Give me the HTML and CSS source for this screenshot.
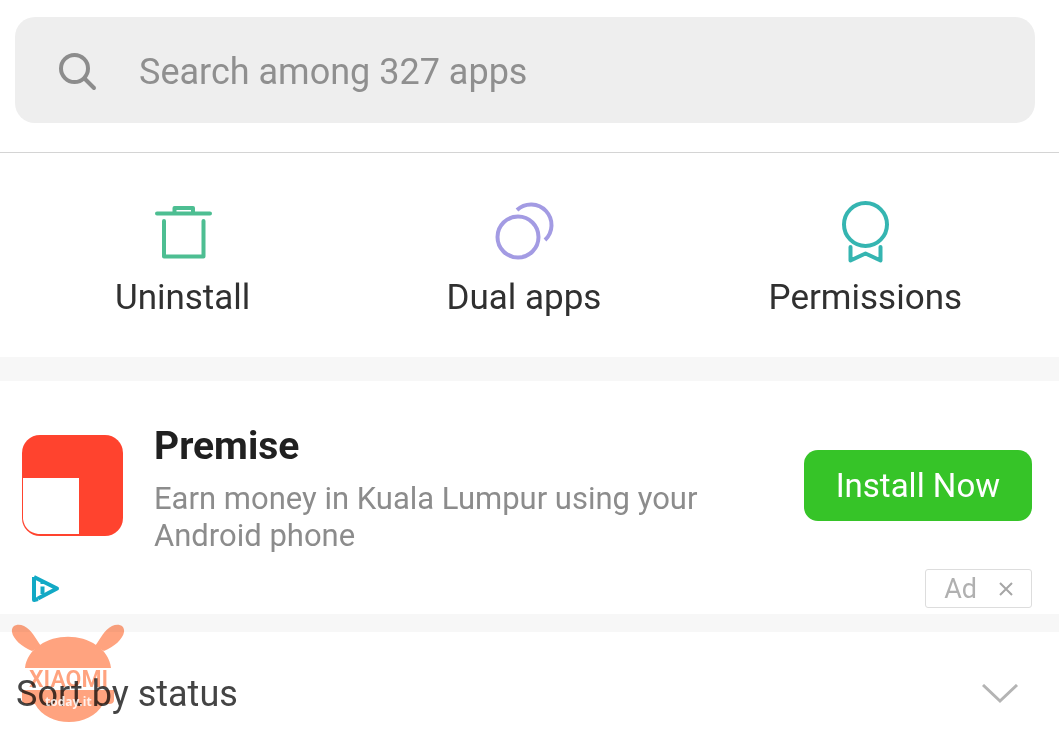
FILE: index.html
```html
<!DOCTYPE html>
<html lang="en">
<head>
    <meta charset="UTF-8">
    <meta name="viewport" content="width=device-width, initial-scale=1.0">
    <title>Manage apps</title>
    <link rel="stylesheet" href="styles.css">
</head>
<body>
    <!-- Search -->
    <header class="search-header">
        <label class="search-box">
            <svg class="search-icon" viewBox="0 0 40 40" aria-hidden="true">
                <circle cx="15.5" cy="16.5" r="13.5" />
                <path d="M25.5 26.5 L35 36" />
            </svg>
            <input type="text" class="search-input" placeholder="Search among 327 apps" aria-label="Search apps">
        </label>
    </header>

    <!-- Main actions -->
    <nav class="actions">
        <button type="button" class="action">
            <svg class="action-icon green" viewBox="0 0 64 64" aria-hidden="true">
                <path d="M6 12.5 H59 M23.5 12 V7 H42 V12 M13 20 V55.5 H52.5 V20" />
            </svg>
            <span>Uninstall</span>
        </button>
        <button type="button" class="action">
            <svg class="action-icon purple" viewBox="0 0 64 64" aria-hidden="true">
                <circle cx="26" cy="36" r="20.5" />
                <path d="M25 9 A20.5 20.5 0 0 1 53 39" />
            </svg>
            <span>Dual apps</span>
        </button>
        <button type="button" class="action">
            <svg class="action-icon teal" viewBox="0 0 64 64" aria-hidden="true">
                <circle cx="32.5" cy="23.5" r="21.5" />
                <path d="M17.5 46 V59.5 L32.5 52.5 L47.5 59.5 V46" />
            </svg>
            <span>Permissions</span>
        </button>
    </nav>

    <!-- Sponsored app -->
    <section class="ad">
        <div class="ad-main">
            <svg class="ad-logo" viewBox="0 0 102 102" aria-hidden="true">
                <rect width="101" height="101" rx="18" fill="#ff432e" />
                <path d="M1 43 H57 V99 H16 Q3 97 1 84 Z" fill="#fff" />
            </svg>
            <div class="ad-text">
                <h2>Premise</h2>
                <p>Earn money in Kuala Lumpur using your Android phone</p>
            </div>
            <button type="button" class="install">Install Now</button>
        </div>
        <div class="ad-footer">
            <a href="#" class="ad-choices" aria-label="Ad choices">
                <svg viewBox="0 0 30 28" aria-hidden="true">
                    <path d="M4 2 L27 13.5 L8 23.5 M4 2 V25 L8 24" />
                    <path d="M12.5 11.5 V19 M12.5 7 V9" />
                </svg>
            </a>
            <button type="button" class="ad-close">
                <span>Ad</span>
                <svg viewBox="0 0 16 16" aria-hidden="true"><path d="M2 2 L14 14 M14 2 L2 14" /></svg>
            </button>
        </div>
    </section>

    <!-- Sorting -->
    <section class="sort">
        <button type="button" class="sort-button">
            <span>Sort by status</span>
            <svg class="chevron" viewBox="0 0 36 20" aria-hidden="true"><path d="M1 1 L18 17 L35 1" /></svg>
        </button>
        <svg class="watermark" viewBox="0 0 116 104" aria-hidden="true">
            <path d="M15 44 C16 34 22 26 30 21 C45 10 71 10 86 21 C94 26 100 34 101 44 Z" />
            <path d="M22 27 C12 23 3 15 2 8 C1 1 8 -1 14 2 C22 6 25 14 31 22 Z" />
            <path d="M94 27 C104 23 113 15 114 8 C115 1 108 -1 102 2 C94 6 91 14 85 22 Z" />
            <path d="M12 66 H104 V76 Q104 80 99 80 H93 C80 104 38 104 25 80 H17 Q12 80 12 76 Z" />
            <text class="mark-name" x="19" y="63">XIAOMI</text>
        </svg>
        <span class="mark-site">today.it</span>
    </section>
</body>
</html>
```
FILE: styles.css
```css
* {
    box-sizing: border-box;
}

body {
    margin: 0;
    font-family: Roboto, sans-serif;
    font-size: 36px;
    background-color: #fff;
    color: #333;
}

button {
    font-family: inherit;
    border: none;
    background: none;
    padding: 0;
    cursor: pointer;
}

svg {
    display: block;
    fill: none;
}

/* Search */
.search-header {
    padding: 17px 24px 29px 15px;
    border-bottom: 1px solid #d4d4d4;
}

.search-box {
    display: flex;
    align-items: center;
    gap: 40px;
    height: 106px;
    padding: 4px 44px 0;
    border-radius: 20px;
    background-color: #eee;
}

.search-icon {
    width: 40px;
    height: 40px;
    stroke: #8c8c8c;
    stroke-width: 4;
    stroke-linecap: round;
}

.search-input {
    flex: 1;
    min-width: 0;
    padding: 0;
    border: none;
    outline: none;
    background: none;
    font: inherit;
    color: #333;
}

.search-input::placeholder {
    color: #8f8f8f;
    opacity: 1;
}

/* Main actions */
.actions {
    display: grid;
    grid-template-columns: repeat(3, 1fr);
    padding: 48px 23px 36px 12px;
}

.action {
    display: flex;
    flex-direction: column;
    align-items: center;
    gap: 10px;
    font-size: 35px;
    line-height: 46px;
    color: #303030;
}

.action-icon {
    width: 64px;
    height: 64px;
    stroke-width: 4;
    stroke-linecap: round;
    stroke-linejoin: round;
}

.green {
    stroke: #4dbe92;
}

.purple {
    stroke: #a39be3;
    stroke-linecap: butt;
}

.teal {
    stroke: #35b5b1;
}

/* Sponsored app */
.ad {
    border-top: 24px solid #f7f7f7;
    border-bottom: 18px solid #f7f7f7;
    padding: 36px 27px 6px 22px;
}

.ad-main {
    display: flex;
    align-items: center;
    gap: 30px;
}

.ad-logo {
    flex: none;
    width: 102px;
    height: 102px;
}

.ad-text {
    flex: 1;
}

.ad-text h2 {
    margin: 0 0 5px;
    font-size: 39px;
    line-height: 58px;
    font-weight: 700;
    color: #202020;
}

.ad-text p {
    max-width: 580px;
    margin: 0;
    font-size: 31px;
    line-height: 37px;
    color: #8c8c8c;
}

.install {
    flex: none;
    padding: 0 32px;
    border-radius: 14px;
    background-color: #36c428;
    font-size: 33px;
    line-height: 71px;
    color: #fff;
}

.ad-footer {
    display: flex;
    align-items: center;
    justify-content: space-between;
    margin-top: 15px;
    padding-left: 8px;
}

.ad-choices svg {
    width: 30px;
    height: 28px;
    stroke: #12a9c5;
    stroke-width: 4;
    stroke-linejoin: round;
}

.ad-close {
    display: flex;
    align-items: center;
    gap: 21px;
    height: 39px;
    padding: 0 17px 0 18px;
    border: 1px solid #ddd;
    border-radius: 3px;
    font-size: 27px;
    color: #b0b0b0;
}

.ad-close svg {
    width: 16px;
    height: 16px;
    stroke: #a6a6a6;
    stroke-width: 2;
}

/* Sorting */
.sort {
    position: relative;
}

.sort-button {
    display: flex;
    align-items: center;
    justify-content: space-between;
    width: 100%;
    padding: 38px 41px 25px 16px;
    font-size: 36px;
    line-height: 48px;
    color: #444;
}

.chevron {
    width: 36px;
    height: 20px;
    stroke: #b4b4b4;
    stroke-width: 3;
}

/* Mascot lies over the row and the divider above it */
.watermark {
    position: absolute;
    left: 10px;
    top: -8px;
    width: 116px;
    height: 104px;
    fill: #ffa37f;
    mix-blend-mode: multiply;
    pointer-events: none;
}

.mark-name {
    font-size: 23px;
    font-weight: 600;
}

.mark-site {
    position: absolute;
    left: 45px;
    top: 62px;
    font-family: "Open Sans", sans-serif;
    font-size: 12px;
    line-height: 16px;
    font-weight: 700;
    color: #fff;
    opacity: 0.85;
    pointer-events: none;
}
```
